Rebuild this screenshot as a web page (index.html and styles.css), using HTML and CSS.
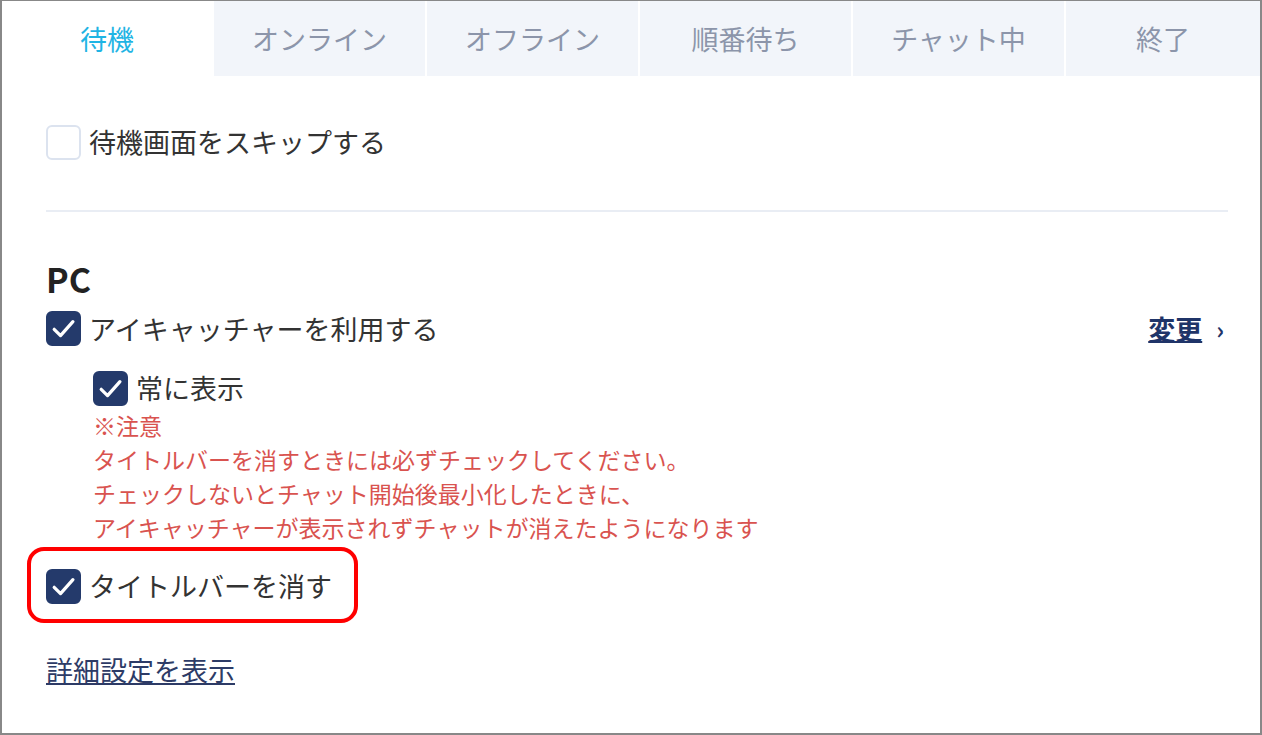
FILE: index.html
```html
<!DOCTYPE html>
<html lang="ja">
<head>
    <meta charset="UTF-8">
    <title>待機設定</title>
    <link rel="stylesheet" href="styles.css">
</head>
<body>
    <div class="panel">
        <div class="tabs">
            <div class="tab active">待機</div>
            <div class="tab">オンライン</div>
            <div class="tab">オフライン</div>
            <div class="tab">順番待ち</div>
            <div class="tab">チャット中</div>
            <div class="tab last">終了</div>
        </div>

        <div class="content">
            <label class="check-row first">
                <span class="box"></span>
                <span>待機画面をスキップする</span>
            </label>

            <div class="divider"></div>

            <div class="heading">PC</div>

            <div class="row-between">
                <label class="check-row">
                    <span class="box checked">
                        <svg viewBox="0 0 24 24"><path d="M4.8 12.6l4.9 4.9 9.6-10.8"/></svg>
                    </span>
                    <span>アイキャッチャーを利用する</span>
                </label>
                <div class="change-wrap">
                    <a class="change" href="#">変更</a>
                    <span class="chevron">›</span>
                </div>
            </div>

            <div class="nested">
                <label class="check-row sub">
                    <span class="box checked">
                        <svg viewBox="0 0 24 24"><path d="M4.8 12.6l4.9 4.9 9.6-10.8"/></svg>
                    </span>
                    <span>常に表示</span>
                </label>
                <div class="notice">
                    ※注意<br>
                    タイトルバーを消すときには必ずチェックしてください。<br>
                    チェックしないとチャット開始後最小化したときに、<br>
                    アイキャッチャーが表示されずチャットが消えたようになります
                </div>
            </div>

            <div class="highlight">
                <label class="check-row">
                    <span class="box checked">
                        <svg viewBox="0 0 24 24"><path d="M4.8 12.6l4.9 4.9 9.6-10.8"/></svg>
                    </span>
                    <span>タイトルバーを消す</span>
                </label>
            </div>

            <div class="more"><a href="#">詳細設定を表示</a></div>
        </div>
    </div>
</body>
</html>
```

FILE: styles.css
```css
* {
    box-sizing: border-box;
}

body {
    margin: 0;
    font-family: "Noto Sans CJK JP", "Noto Sans", sans-serif;
    color: #333;
    background: #fff;
}

.panel {
    width: 1262px;
    height: 735px;
    border: 2px solid #888;
    border-top-width: 1px;
    overflow: hidden;
}

.tabs {
    display: flex;
    gap: 2px;
    height: 75px;
}

.tab {
    width: 211px;
    display: flex;
    align-items: center;
    justify-content: center;
    background: #f2f5fa;
    color: #8c95aa;
    font-size: 27px;
}

.tab.active {
    width: 210px;
    background: #fff;
    color: #1fb4e4;
}

.tab.last {
    width: auto;
    flex: 1;
}

.content {
    padding: 0 32px 0 44px;
}

.check-row {
    display: flex;
    align-items: center;
    gap: 8px;
    height: 36px;
    font-size: 27px;
    line-height: 36px;
    color: #333;
}

.check-row.first {
    margin-top: 48px;
}

.box {
    width: 35px;
    height: 35px;
    border: 2px solid #dce3ef;
    border-radius: 6px;
    background: #fff;
    flex-shrink: 0;
    display: flex;
    align-items: center;
    justify-content: center;
}

.box.checked {
    background: #243a6b;
    border-color: #243a6b;
}

.box svg {
    width: 31px;
    height: 31px;
    fill: none;
    stroke: #fff;
    stroke-width: 2.5;
    stroke-linecap: round;
    stroke-linejoin: round;
}

.divider {
    height: 2px;
    background: #e9edf4;
    margin-top: 50px;
}

.heading {
    margin-top: 47px;
    font-size: 34px;
    font-weight: bold;
    line-height: 40px;
    color: #222;
}

.row-between {
    display: flex;
    justify-content: space-between;
    align-items: center;
    margin-top: 10px;
}

.change-wrap {
    display: flex;
    align-items: center;
    gap: 14px;
    margin-right: 4px;
    color: #1f3468;
}

.change {
    font-size: 27px;
    font-weight: bold;
    color: #1f3468;
    text-decoration: underline;
    text-decoration-thickness: 2px;
}

.chevron {
    font-size: 24px;
    font-weight: bold;
    line-height: 1;
}

.nested {
    padding-left: 47px;
}

.check-row.sub {
    margin-top: 22px;
}

.notice {
    margin-top: 2px;
    font-size: 23px;
    line-height: 34px;
    color: #d9534f;
}

.highlight {
    display: inline-block;
    margin-top: 3px;
    margin-left: -19px;
    padding: 17px 22px 15px 15px;
    border: 4px solid #ff0000;
    border-radius: 17px;
}

.more {
    margin-top: 30px;
    font-size: 27px;
    line-height: 34px;
}

.more a {
    color: #2d3b66;
    text-decoration: underline;
}
```
